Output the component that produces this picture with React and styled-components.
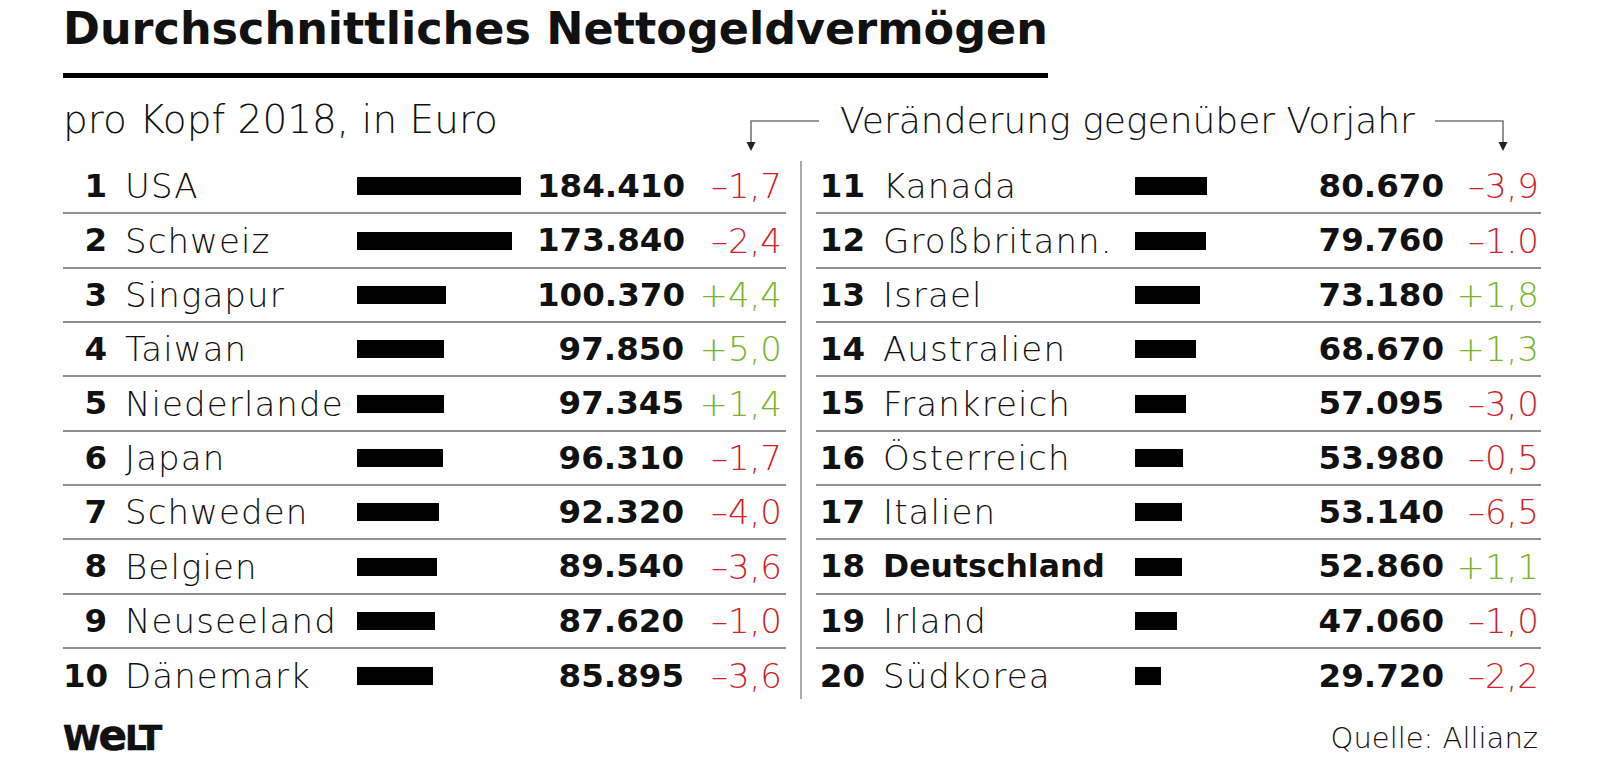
import React from "react";
import styled, { createGlobalStyle } from "styled-components";

const GlobalStyle = createGlobalStyle`
  html, body { margin: 0; padding: 0; background: #fff; }
  body { font-family: "DejaVu Sans", sans-serif; color: #111; }
`;

const Page = styled.div`
  width: 1478px;
  padding: 7px 0 0 63px;
`;

const Title = styled.h1`
  margin: 0;
  width: 985px;
  font: 700 44.5px/44.5px "DejaVu Sans", sans-serif;
  white-space: nowrap;
  padding-bottom: 21px;
  border-bottom: 5px solid #000;
`;

const SubRow = styled.div`
  display: grid;
  grid-template-columns: 683px auto;
  align-items: start;
  margin-top: 23px;
  height: 59.5px;
`;

const Subtitle = styled.div`
  font: 200 39px/38px "DejaVu Sans", sans-serif;
  white-space: nowrap;
`;

const HeaderGroup = styled.div`
  display: flex;
  align-items: flex-start;
`;

const ArrowSvg = styled.svg`
  margin-top: 19.5px;
  flex: none;
`;

const HeaderText = styled.div`
  font: 200 36px/38px "DejaVu Sans", sans-serif;
  white-space: nowrap;
  margin: 1px 20px 0 21px;
`;

const Tables = styled.div`
  display: grid;
  grid-template-columns: 723px 30px 725px;
`;

const Divider = styled.div`
  justify-self: center;
  width: 2px;
  background: #ababab;
  margin: 1px 0 4.5px;
`;

const Table = styled.div`
  display: flex;
  flex-direction: column;
`;

const Row = styled.div`
  display: grid;
  grid-template-columns: ${(p) => p.$cols};
  align-items: center;
  height: 54.35px;
  box-sizing: border-box;
  border-bottom: 2px solid #8e8e8e;
  &:last-child { border-bottom: none; }
`;

const Rank = styled.span`
  font: 700 32.5px/1 "DejaVu Sans", sans-serif;
  text-align: right;
`;

const Name = styled.span`
  padding-left: 18px;
  white-space: nowrap;
  font: ${(p) => (p.$bold ? "700 31.5px/1" : "200 34px/1")} "DejaVu Sans", sans-serif;
  letter-spacing: ${(p) => (p.$bold ? "0" : "1.1px")};
`;

const Bar = styled.div`
  height: 18px;
  background: #000;
`;

const Value = styled.span`
  font: 700 32.5px/1 "DejaVu Sans", sans-serif;
  text-align: right;
  white-space: nowrap;
`;

const Change = styled.span`
  font: 200 34px/1 "DejaVu Sans", sans-serif;
  text-align: right;
  white-space: nowrap;
  color: ${(p) => (p.$up ? "#78b32c" : "#cf1f27")};
`;

const Footer = styled.div`
  display: flex;
  justify-content: space-between;
  align-items: flex-end;
  width: 1475px;
  margin-top: 19px;
  height: 32px;
`;

const Logo = styled.div`
  font: 700 34px/32px "DejaVu Sans", sans-serif;
  letter-spacing: -2px;
  -webkit-text-stroke: 0.6px #000;
  display: flex;
  align-items: baseline;
`;

const LogoE = styled.span`
  font-size: 42px;
`;

const Source = styled.div`
  font: 200 29px/32px "DejaVu Sans", sans-serif;
`;

const left = [
  [1, "USA", 184410, "184.410", "–1,7"],
  [2, "Schweiz", 173840, "173.840", "–2,4"],
  [3, "Singapur", 100370, "100.370", "+4,4"],
  [4, "Taiwan", 97850, "97.850", "+5,0"],
  [5, "Niederlande", 97345, "97.345", "+1,4"],
  [6, "Japan", 96310, "96.310", "–1,7"],
  [7, "Schweden", 92320, "92.320", "–4,0"],
  [8, "Belgien", 89540, "89.540", "–3,6"],
  [9, "Neuseeland", 87620, "87.620", "–1,0"],
  [10, "Dänemark", 85895, "85.895", "–3,6"],
];

const right = [
  [11, "Kanada", 80670, "80.670", "–3,9"],
  [12, "Großbritann.", 79760, "79.760", "–1.0"],
  [13, "Israel", 73180, "73.180", "+1,8"],
  [14, "Australien", 68670, "68.670", "+1,3"],
  [15, "Frankreich", 57095, "57.095", "–3,0"],
  [16, "Österreich", 53980, "53.980", "–0,5"],
  [17, "Italien", 53140, "53.140", "–6,5"],
  [18, "Deutschland", 52860, "52.860", "+1,1", true],
  [19, "Irland", 47060, "47.060", "–1,0"],
  [20, "Südkorea", 29720, "29.720", "–2,2"],
];

function DataTable({ rows, cols }) {
  return (
    <Table>
      {rows.map(([rank, name, v, vs, ch, bold]) => (
        <Row key={rank} $cols={cols}>
          <Rank>{rank}</Rank>
          <Name $bold={bold}>{name}</Name>
          <div>
            <Bar style={{ width: `${(v / 1125).toFixed(1)}px` }} />
          </div>
          <Value>{vs}</Value>
          <Change $up={ch.startsWith("+")}>{ch}</Change>
        </Row>
      ))}
    </Table>
  );
}

export default function App() {
  return (
    <>
      <GlobalStyle />
      <Page>
        <Title>Durchschnittliches Nettogeldvermögen</Title>
        <SubRow>
          <Subtitle>pro Kopf 2018, in Euro</Subtitle>
          <HeaderGroup>
            <ArrowSvg width="73" height="32" viewBox="0 0 73 32">
              <path d="M73 1H5V22" stroke="#777" strokeWidth="1.6" fill="none" />
              <path d="M0.5 22h9L5 31z" fill="#222" />
            </ArrowSvg>
            <HeaderText>Veränderung gegenüber Vorjahr</HeaderText>
            <ArrowSvg width="73" height="32" viewBox="0 0 73 32">
              <path d="M0 1H68V22" stroke="#777" strokeWidth="1.6" fill="none" />
              <path d="M63.5 22h9L68 31z" fill="#222" />
            </ArrowSvg>
          </HeaderGroup>
        </SubRow>
        <Tables>
          <DataTable rows={left} cols="44px 250px 180px 147px 98px" />
          <Divider />
          <DataTable rows={right} cols="49px 270px 180px 129px 95px" />
        </Tables>
        <Footer>
          <Logo>
            W<LogoE>e</LogoE>LT
          </Logo>
          <Source>Quelle: Allianz</Source>
        </Footer>
      </Page>
    </>
  );
}
